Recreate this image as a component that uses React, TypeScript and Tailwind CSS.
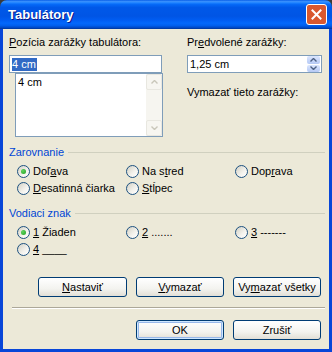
import type { ReactNode } from "react";

function Radio({ checked, children }: { checked?: boolean; children: ReactNode }) {
  return (
    <div className="flex items-center h-[13px]">
      <span className="relative shrink-0 w-[13px] h-[13px] rounded-full border border-[#1c5180] bg-[linear-gradient(135deg,#d2d0c4,#f4f3ee_60%,#ffffff)]">
        {checked && (
          <span className="absolute left-[3px] top-[3px] w-[5px] h-[5px] rounded-full bg-[radial-gradient(circle_at_35%_35%,#5fd35f,#21a121)]" />
        )}
      </span>
      <span className="ml-[3px] whitespace-nowrap">{children}</span>
    </div>
  );
}

function GroupLabel({ children }: { children: ReactNode }) {
  return (
    <div className="flex items-center h-[13px]">
      <span className="text-[#0046d5]">{children}</span>
      <span className="flex-1 h-px ml-[4px] bg-[#d0d0bf]" />
    </div>
  );
}

function Btn({ children, def, w }: { children: ReactNode; def?: boolean; w: string }) {
  return (
    <button
      className={
        "h-[20px] rounded-[3px] border border-[#003c74] bg-[linear-gradient(180deg,#ffffff,#f3f3ef_60%,#e2dfd6)] text-black text-[11px] leading-none " +
        w +
        (def ? " shadow-[inset_0_0_0_1px_#cee7ff,inset_0_0_0_2px_#98b8ea]" : "")
      }
    >
      {children}
    </button>
  );
}

function Chevron({ up, color }: { up?: boolean; color: string }) {
  return (
    <svg width="7" height="4" viewBox="0 0 7 4">
      <path d={up ? "M0.5 3.5 L3.5 0.5 L6.5 3.5" : "M0.5 0.5 L3.5 3.5 L6.5 0.5"} fill="none" stroke={color} strokeWidth="1.4" />
    </svg>
  );
}

export default function App() {
  return (
    <div className="w-[332px] h-[352px] flex flex-col bg-[#3a3a3a] font-['Liberation_Sans',Arial,sans-serif] text-[11px] leading-[13px] text-black select-none">
      {/* Title bar */}
      <div className="h-[29px] shrink-0 flex items-center pl-[8px] pr-[5px] rounded-t-[7px] bg-[linear-gradient(180deg,#0a5fe8_0%,#3d95ff_6%,#1a80ff_10%,#0467f6_16%,#0058e8_26%,#0055e5_56%,#005df3_70%,#0368fc_80%,#005fee_88%,#0049c8_95%,#003596_100%)]">
        <span className="text-white font-bold text-[13px] [text-shadow:1px_1px_0_#0a1a8a]">Tabulátory</span>
        <div className="ml-auto w-[21px] h-[21px] rounded-[3px] border border-white bg-[#d9582f] shadow-[inset_0_0_0_12px_#d9582f] flex items-center justify-center">
          <svg width="11" height="11" viewBox="0 0 11 11">
            <rect x="0" y="0" width="11" height="11" fill="#d9582f" />
            <path d="M1.5 1.5 L9.5 9.5 M9.5 1.5 L1.5 9.5" stroke="#ffffff" strokeWidth="2" strokeLinecap="square" />
          </svg>
        </div>
      </div>

      {/* Body */}
      <div className="flex-1 flex flex-col bg-[#ece9d8] border-x-[3px] border-b-[3px] border-[#0846d8] pl-[6px] pr-[4px] pt-[7px]">
        {/* Top section */}
        <div className="flex">
          <div className="w-[154px]">
            <div>
              <span className="underline">P</span>ozícia zarážky tabulátora:
            </div>
            <div className="mt-[6px] w-[153px] h-[18px] border border-[#7f9db9] bg-white flex items-center pl-[2px]">
              <span className="bg-[#316ac5] text-white pr-[1px]">4 cm</span>
            </div>
            <div className="ml-[6px] w-[148px] h-[64px] border border-[#7f9db9] bg-white flex">
              <div className="flex-1 pl-[2px] pt-[2px]">4 cm</div>
              <div className="w-[16px] flex flex-col bg-[#f6f5f0]">
                <div className="h-[16px] rounded-[2px] border border-[#e8e7e0] bg-[#f7f6f1] flex items-center justify-center">
                  <Chevron up color="#c9c7ba" />
                </div>
                <div className="flex-1" />
                <div className="h-[16px] rounded-[2px] border border-[#e8e7e0] bg-[#f7f6f1] flex items-center justify-center">
                  <Chevron color="#c9c7ba" />
                </div>
              </div>
            </div>
          </div>
          <div className="ml-[24px] w-[135px]">
            <div>
              Pr<span className="underline">e</span>dvolené zarážky:
            </div>
            <div className="mt-[6px] h-[18px] border border-[#7f9db9] bg-white flex items-center pl-[2px]">
              <span className="flex-1">1,25 cm</span>
              <div className="w-[13px] h-[16px] flex flex-col gap-px mr-px">
                <div className="flex-1 rounded-[2px] bg-[linear-gradient(180deg,#dbe6fd,#b5c9f5)] flex items-center justify-center">
                  <Chevron up color="#4d6185" />
                </div>
                <div className="flex-1 rounded-[2px] bg-[linear-gradient(180deg,#dbe6fd,#b5c9f5)] flex items-center justify-center">
                  <Chevron color="#4d6185" />
                </div>
              </div>
            </div>
            <div className="mt-[13px]">Vymazať tieto zarážky:</div>
          </div>
        </div>

        {/* Zarovnanie */}
        <div className="mt-[9px]">
          <GroupLabel>Zarovnanie</GroupLabel>
          <div className="mt-[6px] ml-[8px] grid grid-cols-[109px_109px_1fr] gap-y-[4px]">
            <Radio checked>
              Doľ<span className="underline">a</span>va
            </Radio>
            <Radio>
              Na s<span className="underline">t</span>red
            </Radio>
            <Radio>
              Dop<span className="underline">r</span>ava
            </Radio>
            <Radio>
              <span className="underline">D</span>esatinná čiarka
            </Radio>
            <Radio>
              <span className="underline">S</span>tĺpec
            </Radio>
          </div>
        </div>

        {/* Vodiaci znak */}
        <div className="mt-[12px]">
          <GroupLabel>Vodiaci znak</GroupLabel>
          <div className="mt-[6px] ml-[8px] grid grid-cols-[109px_109px_1fr] gap-y-[4px]">
            <Radio checked>
              <span className="underline">1</span> Žiaden
            </Radio>
            <Radio>
              <span className="underline">2</span> .......
            </Radio>
            <Radio>
              <span className="underline">3</span> -------
            </Radio>
            <Radio>
              <span className="underline">4</span> ____
            </Radio>
          </div>
        </div>

        {/* Action buttons */}
        <div className="mt-[21px] flex justify-end gap-[9px] pr-[4px]">
          <Btn w="w-[89px]">
            <span className="underline">N</span>astaviť
          </Btn>
          <Btn w="w-[88px]">
            <span className="underline">V</span>ymazať
          </Btn>
          <Btn w="w-[88px]">
            Vy<span className="underline">m</span>azať všetky
          </Btn>
        </div>

        <div className="mt-[10px] ml-[3px] h-[2px] border-t border-[#aca899] border-b border-b-white" />

        <div className="mt-[11px] flex justify-end gap-[9px] pr-[4px]">
          <Btn w="w-[88px]" def>
            OK
          </Btn>
          <Btn w="w-[88px]">Zrušiť</Btn>
        </div>
      </div>
    </div>
  );
}
